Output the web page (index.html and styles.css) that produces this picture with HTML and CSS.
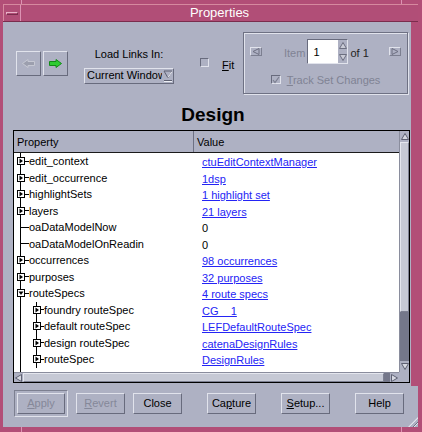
FILE: index.html
```html
<!DOCTYPE html>
<html lang="en">
<head>
<meta charset="utf-8">
<title>Properties</title>
<link rel="stylesheet" href="styles.css">
</head>
<body>
<div class="window">
  <span class="mark mark-top mark-a"></span>
  <span class="mark mark-top mark-b"></span>
  <span class="mark mark-bot mark-a"></span>
  <span class="mark mark-bot mark-b"></span>
  <div class="titlebar">
    <div class="winmenu"><span class="dash"></span></div>
    <div class="title">Properties</div>
  </div>
  <div class="content">
    <div class="toolbar">
      <div class="nav">
        <div class="navbtn"><svg width="13" height="9" viewBox="0 0 13 9"><polygon class="arrow-off" points="12.5,2.5 6,2.5 6,0.5 0.5,4.5 6,8.5 6,6.5 12.5,6.5"/></svg></div>
        <div class="navbtn"><svg width="13" height="9" viewBox="0 0 13 9"><polygon class="arrow-on" points="0.5,2.5 7,2.5 7,0.5 12.5,4.5 7,8.5 7,6.5 0.5,6.5"/></svg></div>
      </div>
      <div class="loadlinks">
        <div class="lbl">Load Links In:</div>
        <div class="combo">
          <span class="combo-text">Current Window</span>
          <svg class="combo-arrow" width="10" height="12" viewBox="0 0 10 12"><polygon points="1,1 9,1 5,8" fill="none" stroke="#5e6173"/><line x1="5" y1="7.5" x2="9" y2="1.5" stroke="#f2f3f7"/><line x1="1" y1="10.5" x2="9" y2="10.5" stroke="#5e6173"/><line x1="1" y1="11.5" x2="9" y2="11.5" stroke="#eef0f5"/></svg>
        </div>
      </div>
      <div class="fit"><span class="check"></span><span class="fit-lbl"><u>F</u>it</span></div>
      <div class="setbox">
        <div class="setrow">
          <span class="minibtn"><svg width="8" height="7" viewBox="0 0 8 7"><polygon points="7,0.5 7,6.5 1,3.5" fill="none" stroke="#6c6f80"/></svg></span>
          <span class="dim item-lbl">Item</span>
          <span class="spin">
            <span class="spin-field">1</span>
            <span class="spin-btns">
              <svg width="8" height="8" viewBox="0 0 8 8"><polygon points="4,0.5 7.5,6.5 0.5,6.5" fill="#c9cbd6" stroke="#6c6f80"/></svg>
              <svg width="8" height="8" viewBox="0 0 8 8"><polygon points="0.5,1.5 7.5,1.5 4,7.5" fill="#c9cbd6" stroke="#6c6f80"/></svg>
            </span>
          </span>
          <span class="of-lbl">of 1</span>
          <span class="minibtn minibtn-r"><svg width="8" height="7" viewBox="0 0 8 7"><polygon points="1,0.5 1,6.5 7,3.5" fill="none" stroke="#6c6f80"/></svg></span>
        </div>
        <div class="trackrow">
          <span class="check"><svg width="8" height="8" viewBox="0 0 8 8"><polyline points="1,4 3,6.5 7,1" fill="none" stroke="#7c7f90" stroke-width="1.2"/></svg></span>
          <span class="dim"><u>T</u>rack Set Changes</span>
        </div>
      </div>
    </div>

    <h1 class="heading">Design</h1>

    <div class="list">
      <div class="table">
        <div class="thead">
          <div class="th th-prop">Property</div>
          <div class="th th-val">Value</div>
        </div>
        <div class="tbody">
          <div class="row"><div class="prop"><span class="box"></span><span class="dash1"></span>edit_context</div><div class="val"><a>ctuEditContextManager</a></div></div>
          <div class="row"><div class="prop"><span class="box"></span><span class="dash1"></span>edit_occurrence</div><div class="val"><a>1dsp</a></div></div>
          <div class="row"><div class="prop"><span class="box"></span><span class="dash1"></span>highlightSets</div><div class="val"><a>1 highlight set</a></div></div>
          <div class="row"><div class="prop"><span class="box"></span><span class="dash1"></span>layers</div><div class="val"><a>21 layers</a></div></div>
          <div class="row"><div class="prop"><span class="stub"></span>oaDataModelNow</div><div class="val">0</div></div>
          <div class="row"><div class="prop"><span class="stub"></span>oaDataModelOnReadin</div><div class="val">0</div></div>
          <div class="row"><div class="prop"><span class="box"></span><span class="dash1"></span>occurrences</div><div class="val"><a>98 occurrences</a></div></div>
          <div class="row"><div class="prop"><span class="box"></span><span class="dash1"></span>purposes</div><div class="val"><a>32 purposes</a></div></div>
          <div class="row"><div class="prop"><span class="box box-open"></span><span class="dash1"></span>routeSpecs</div><div class="val"><a>4 route specs</a></div></div>
          <div class="row"><div class="prop l2"><span class="box"></span><span class="dash2"></span>foundry routeSpec</div><div class="val"><a>CG&nbsp;&nbsp;&nbsp;&nbsp;1</a></div></div>
          <div class="row"><div class="prop l2"><span class="box"></span><span class="dash2"></span>default routeSpec</div><div class="val"><a>LEFDefaultRouteSpec</a></div></div>
          <div class="row"><div class="prop l2"><span class="box"></span><span class="dash2"></span>design routeSpec</div><div class="val"><a>catenaDesignRules</a></div></div>
          <div class="row"><div class="prop l2"><span class="box"></span><span class="dash2"></span>routeSpec</div><div class="val"><a>DesignRules</a></div></div>
        </div>
      </div>
      <div class="vscroll">
        <span class="sarrow sarrow-v"><svg width="8" height="7" viewBox="0 0 8 7"><polygon points="4,0.5 7.5,6.5 0.5,6.5" fill="#d6d8e1" stroke="#5e6173"/></svg></span>
        <span class="vthumb"></span>
        <span class="trough"></span>
        <span class="sarrow sarrow-v"><svg width="8" height="7" viewBox="0 0 8 7"><polygon points="0.5,0.5 7.5,0.5 4,6.5" fill="#d6d8e1" stroke="#5e6173"/></svg></span>
      </div>
      <div class="hscroll">
        <span class="sarrow sarrow-h"><svg width="7" height="8" viewBox="0 0 7 8"><polygon points="6.5,0.5 6.5,7.5 0.5,4" fill="#d6d8e1" stroke="#5e6173"/></svg></span>
        <span class="hthumb"></span>
        <span class="trough"></span>
        <span class="sarrow sarrow-h"><svg width="7" height="8" viewBox="0 0 7 8"><polygon points="0.5,0.5 0.5,7.5 6.5,4" fill="#d6d8e1" stroke="#5e6173"/></svg></span>
      </div>
      <div class="corner"></div>
    </div>

    <div class="buttons">
      <div class="group">
        <div class="defring"><div class="btn off"><u>A</u>pply</div></div>
        <div class="btn off"><u>R</u>evert</div>
        <div class="btn">Close</div>
      </div>
      <div class="group group-b">
        <div class="btn">Ca<u>p</u>ture</div>
        <div class="btn"><u>S</u>etup...</div>
        <div class="btn">Help</div>
      </div>
    </div>
    <span class="grip"></span>
  </div>
</div>
</body>
</html>
```

FILE: styles.css
```css
* { box-sizing: border-box; margin: 0; padding: 0; }
html, body { margin: 0; background: #b24e77; }
body {
  font-family: "Liberation Sans", Arial, Helvetica, sans-serif;
  font-size: 11px;
  color: #000;
}
u { text-decoration: underline; text-underline-offset: 1px; }

.window {
  position: relative;
  width: 422px;
  height: 432px;
  background: #b24e77;
  padding: 4px 4px 5px 3px;
  display: flex;
  flex-direction: column;
}
.mark { position: absolute; background: #dc93b3; width: 1px; }
.mark-top { top: 0; height: 4px; }
.mark-bot { bottom: 0; height: 5px; }
.mark-a { left: 21px; }
.mark-b { left: 401px; }

/* title bar */
.titlebar {
  height: 18px;
  display: flex;
  background: #b14e77;
  border-top: 1px solid #d6899f;
  border-bottom: 1px solid #7a2d4d;
}
.winmenu {
  width: 18px;
  border-right: 1px solid #dc93b3;
  border-left: 1px solid #d6899f;
  display: flex;
  align-items: center;
  justify-content: center;
}
.winmenu .dash {
  width: 12px;
  height: 3px;
  border-top: 1px solid #e9b3c9;
  border-left: 1px solid #e9b3c9;
  border-bottom: 1px solid #7a2d4d;
  border-right: 1px solid #7a2d4d;
  margin-top: 1px;
}
.title {
  flex: 1;
  text-align: center;
  color: #fff;
  font-size: 13px;
  line-height: 15px;
}

/* content */
.content {
  position: relative;
  flex: 1;
  background: linear-gradient(#b24e77, #b24e77) right top / 7px 364px no-repeat, #aeb1c3;
  display: flex;
  flex-direction: column;
}

.toolbar {
  display: flex;
  align-items: flex-start;
  height: 82px;
  padding-left: 13px;
  padding-right: 10px;
}
.nav { display: flex; gap: 2px; margin-top: 29px; }
.navbtn {
  width: 25px;
  height: 25px;
  border: 1px solid;
  border-color: #e1e3ec #686b7d #686b7d #e1e3ec;
  display: flex;
  align-items: center;
  justify-content: center;
}
.arrow-off { fill: #9c9fae; stroke: #c6c8d3; stroke-width: 1; }
.arrow-on { fill: #2ecb32; stroke: #128a18; stroke-width: 1; }

.loadlinks {
  margin-left: 16px;
  margin-top: 25px;
  width: 90px;
  display: flex;
  flex-direction: column;
  align-items: center;
}
.lbl { line-height: 14px; white-space: nowrap; }
.combo {
  margin-top: 7px;
  width: 90px;
  height: 16px;
  border: 1px solid;
  border-color: #e1e3ec #686b7d #686b7d #e1e3ec;
  display: flex;
  align-items: flex-start;
}
.combo-text {
  width: 77px;
  padding-left: 2px;
  line-height: 13px;
  overflow: hidden;
  white-space: nowrap;
}
.combo-arrow { margin-left: 1px; margin-top: 1px; }

.fit {
  margin-left: 26px;
  margin-top: 36px;
  display: flex;
  align-items: flex-start;
}
.check {
  width: 9px;
  height: 9px;
  border: 1px solid;
  border-color: #686b7d #e1e3ec #e1e3ec #686b7d;
  display: flex;
  align-items: center;
  justify-content: center;
}
.fit-lbl { margin-left: 13px; line-height: 12px; margin-top: 1px; }

.setbox {
  margin-left: auto;
  margin-top: 10px;
  width: 165px;
  height: 62px;
  border: 1px solid #6e7183;
  box-shadow: inset 1px 1px 0 #e1e3ec, 1px 1px 0 #e1e3ec;
  padding-top: 6px;
  display: flex;
  flex-direction: column;
}
.setrow {
  display: flex;
  align-items: center;
  height: 25px;
  padding-left: 6px;
  padding-right: 6px;
}
.minibtn {
  width: 12px;
  height: 9px;
  border: 1px solid;
  border-color: #e1e3ec #7c7f90 #7c7f90 #e1e3ec;
  display: flex;
  align-items: center;
  justify-content: center;
  margin-top: -1px;
}
.minibtn-r { margin-left: auto; }
.dim { color: #808394; }
.item-lbl { margin-left: 22px; padding-top: 2px; }
.spin {
  margin-left: 2px;
  width: 41px;
  height: 25px;
  border: 1px solid;
  border-color: #686b7d #e1e3ec #e1e3ec #686b7d;
  display: flex;
}
.spin-field {
  width: 30px;
  background: #fff;
  padding-left: 5px;
  padding-top: 6px;
  line-height: 12px;
}
.spin-btns {
  flex: 1;
  display: flex;
  flex-direction: column;
  align-items: center;
  justify-content: center;
  gap: 3px;
}
.of-lbl { margin-left: 2px; padding-top: 2px; color: #222; }
.trackrow {
  display: flex;
  align-items: flex-start;
  justify-content: center;
  margin-top: 11px;
  gap: 6px;
}
.trackrow .check { width: 10px; height: 9px; }
.trackrow .dim { line-height: 12px; margin-top: -1px; }

.heading {
  height: 22px;
  font-size: 19px;
  line-height: 22px;
  font-weight: bold;
  text-align: center;
  padding-left: 5px;
}

/* list */
.list {
  margin: 4px 8px 0 10px;
  width: 397px;
  height: 253px;
  border: 1px solid #000;
  display: grid;
  grid-template-columns: 385px 10px;
  grid-template-rows: 241px 10px;
}
.table { display: flex; flex-direction: column; overflow: hidden; }
.thead {
  height: 22px;
  display: flex;
  border-bottom: 1px solid #1a1a1a;
  background: #aeb1c3;
}
.th { line-height: 21px; padding-top: 1px; }
.th-prop { width: 180px; padding-left: 3px; border-right: 1px solid #6e7183; }
.th-val { flex: 1; padding-left: 3px; }
.tbody {
  flex: 1;
  background: linear-gradient(#000, #000) 6px 0 / 1px 100% no-repeat, #fff;
  overflow: hidden;
}
.row { display: flex; align-items: center; height: 16.5px; }
.prop {
  width: 180px;
  height: 100%;
  display: flex;
  align-items: center;
  white-space: nowrap;
}
.prop.l2 { background: linear-gradient(#000, #000) 22px 0 / 1px 100% no-repeat; }
.box {
  width: 8px;
  height: 8px;
  margin-left: 3px;
  border: 1px solid #000;
  background: #fff url("data:image/svg+xml,%3Csvg xmlns='http://www.w3.org/2000/svg' width='6' height='6'%3E%3Cpolygon points='1.5,0.5 1.5,5.5 5,3' fill='%23000'/%3E%3C/svg%3E") center / 6px 6px no-repeat;
}
.box-open {
  background-image: url("data:image/svg+xml,%3Csvg xmlns='http://www.w3.org/2000/svg' width='6' height='6'%3E%3Cpolygon points='0.5,1.5 5.5,1.5 3,5' fill='%23000'/%3E%3C/svg%3E");
}
.l2 .box { margin-left: 19px; }
.dash1 { width: 4px; height: 1px; background: #000; }
.dash2 { width: 3px; height: 1px; background: #000; }
.stub { width: 9px; height: 1px; margin-left: 6px; background: #000; }
.val { flex: 1; padding-left: 8px; padding-top: 2px; white-space: nowrap; }
.val a { color: #2424f5; text-decoration: underline; text-underline-offset: 1px; }

.vscroll {
  display: flex;
  flex-direction: column;
  background: #aeb1c3;
  border-left: 1px solid #8a8d9d;
}
.hscroll {
  display: flex;
  background: #aeb1c3;
  border-top: 1px solid #8a8d9d;
}
.sarrow {
  display: flex;
  align-items: center;
  justify-content: center;
  background: #aeb1c3;
}
.sarrow-v { height: 11px; }
.sarrow-h { width: 9px; }
.vthumb {
  height: 170px;
  background: #c6c9d5;
  border: 1px solid;
  border-color: #e4e6ee #7d8092 #7d8092 #e4e6ee;
}
.hthumb {
  width: 361px;
  background: #c6c9d5;
  border: 1px solid;
  border-color: #e4e6ee #7d8092 #7d8092 #e4e6ee;
}
.trough { flex: 1; background: #74778a; }
.corner { background: #aeb1c3; }

/* buttons */
.buttons {
  display: flex;
  align-items: flex-start;
  padding-left: 11px;
  margin-top: 7px;
}
.group { display: flex; align-items: flex-start; gap: 8px; }
.group-b { margin-left: 25px; gap: 25px; }
.group .btn { margin-top: 3px; }
.defring {
  width: 54px;
  height: 27px;
  border: 1px solid;
  border-color: #7c7f90 #e1e3ec #e1e3ec #7c7f90;
  padding: 2px 0 0 2px;
}
.group .defring .btn { margin-top: 0; }
.btn {
  width: 49px;
  height: 21px;
  border: 1px solid;
  border-color: #e1e3ec #686b7d #686b7d #e1e3ec;
  text-align: center;
  line-height: 19px;
  white-space: nowrap;
}
.defring .btn { width: 48px; }
.btn.off { color: #858899; }

.grip {
  position: absolute;
  right: 0;
  bottom: 0;
  width: 10px;
  height: 10px;
  background: repeating-linear-gradient(135deg, transparent 0 2px, #6e7183 2px 3px, #e1e3ec 3px 4px);
  clip-path: polygon(100% 0, 100% 100%, 0 100%);
}
```
